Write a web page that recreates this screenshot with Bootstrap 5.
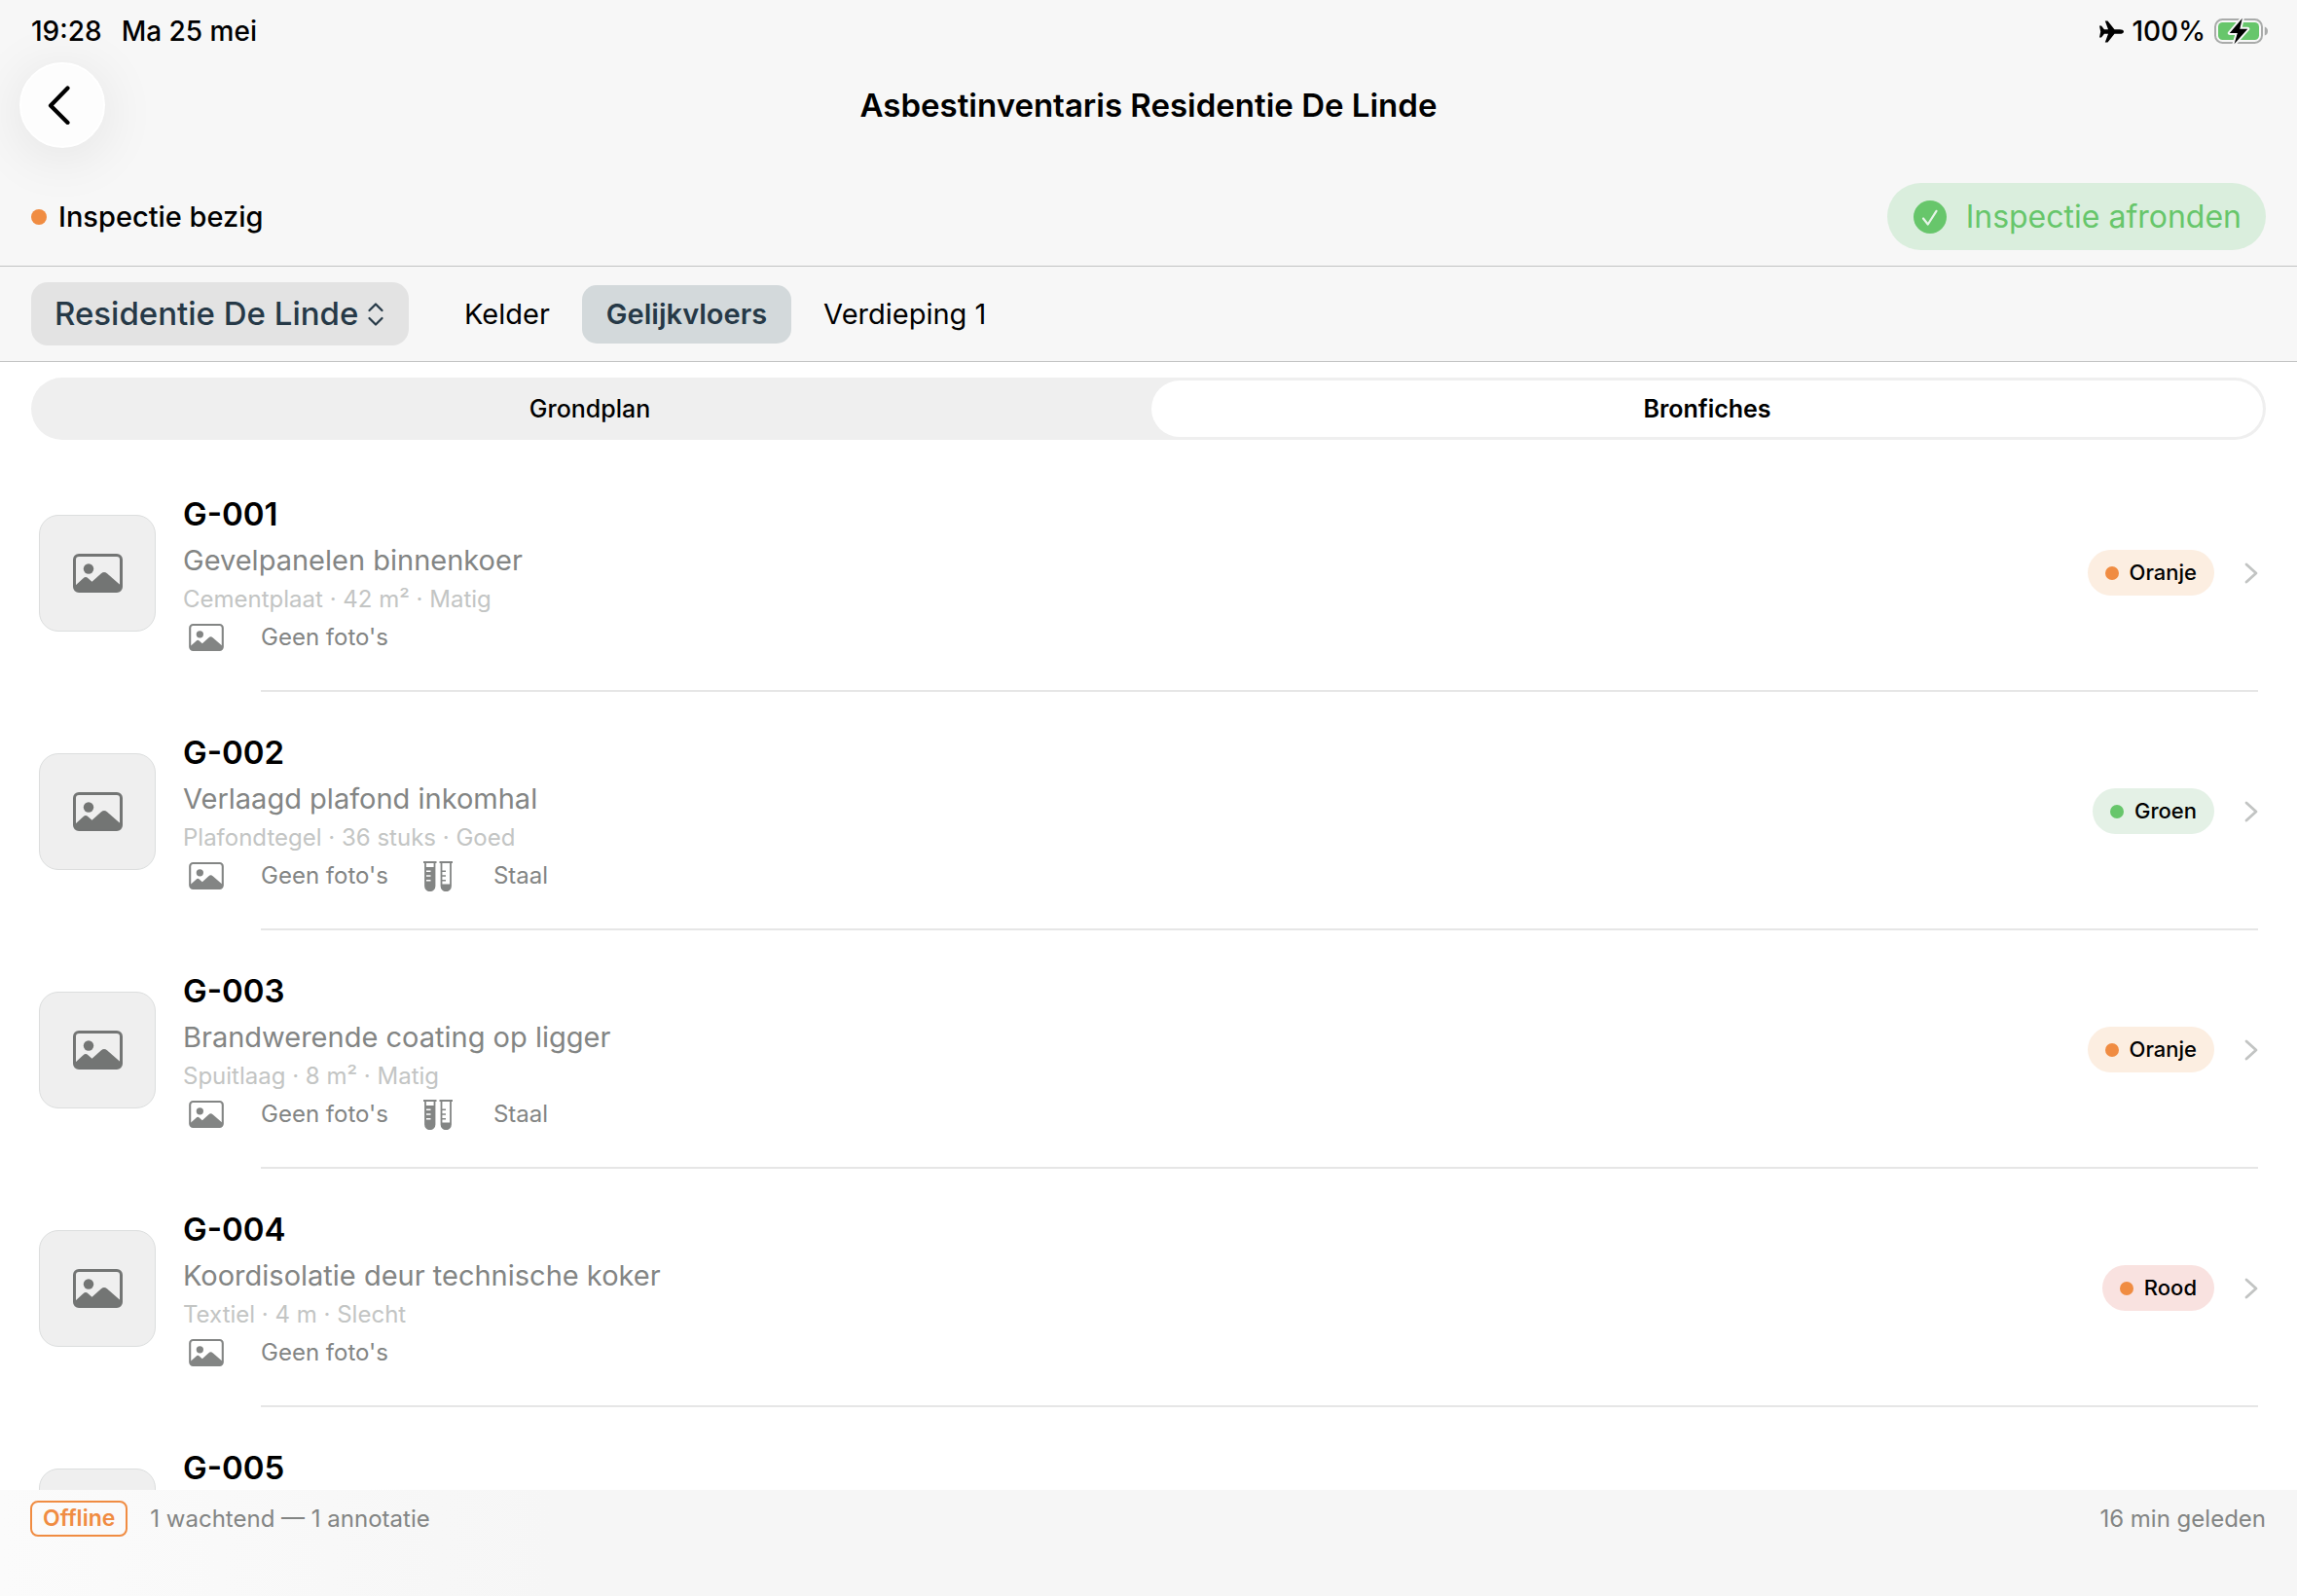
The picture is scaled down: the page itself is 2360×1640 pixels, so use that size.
<!DOCTYPE html>
<html lang="nl">
<head>
<meta charset="utf-8">
<meta name="viewport" content="width=device-width, initial-scale=1">
<title>Asbestinventaris Residentie De Linde</title>
<link href="https://cdn.jsdelivr.net/npm/bootstrap@5.3.0/dist/css/bootstrap.min.css" rel="stylesheet">
<style>
:root {
  --ink: #263947;
  --orange: #f08c42;
  --green: #67c66b;
  --grey: #838584;
  --faint: #c3c5c4;
  --bar: #f7f7f7;
  --hair: #c2c3c3;
}
body { font-family: Inter, "Liberation Sans", sans-serif; font-size: 29px; line-height: 40px; color: #000; background: #fff; }
svg { display: block; flex: none; }
.page-x { padding-left: 32px; padding-right: 32px; }
.bar { background: var(--bar); }
.hairline { border-bottom: 1px solid var(--hair); }

.status-bar { height: 64px; padding: 0 30px 0 32px; font-size: 28px; }
.clock { gap: 20px; }
.battery { margin-left: 9px; }
.title-bar { padding: 0 20px; }
.title-bar h1 { font-size: 33px; line-height: 40px; }
.back-btn { width: 88px; height: 88px; background: #fdfdfd; border: 2px solid #fff; box-shadow: 0 8px 60px rgba(0, 0, 0, .09); }
.back-btn:hover { background: #fff; }
.phase { padding-top: 36px; padding-bottom: 16px; }
.dot { width: 14px; height: 14px; border-radius: 50%; background: var(--orange); flex: none; }
.dot-lg { width: 16px; height: 16px; }
.dot-green { background: var(--green); }
.finish-btn { gap: 20px; padding: 14px 25px 14px 27px; font-size: 32px; line-height: 41px; color: var(--green); background: #daeedd; border: 0; }

.building { height: 65px; padding: 0 51px 2px 24px; font-size: 33px; color: var(--ink); background: #e3e3e3; border: 0; border-radius: 17px; appearance: none; }
.building-icon { right: 26px; top: 21px; pointer-events: none; }
.floors { gap: 8px; }
.floors .nav-link { padding: 10px 25px; color: #000; border-radius: 15px; }
.floors .nav-link.active { color: var(--ink); background: #d3d9db; }

.segments { gap: 6px; padding: 3px; border-radius: 32px; background: #efefef; }
.segments .btn { font-size: 25px; line-height: 58px; padding: 0; border: 0; border-radius: 29px; color: #000; }
.segments .btn-check:checked + .btn { background: #fff; font-weight: 600; }

.source-list { margin-top: 14px; min-height: 0; }
.source-row { padding: 2px 40px 0; color: inherit; }
.source-text { flex: 1; min-height: 241px; margin-left: 28px; padding: 36px 0 31px; }
.source-code { font-size: 33px; line-height: 48px; }
.source-name { line-height: 48px; color: var(--grey); }
.source-meta { font-size: 24px; line-height: 32px; color: var(--faint); }
.source-tags { font-size: 24px; line-height: 46px; color: var(--grey); }
.tag-icon { width: 80px; padding-left: 6px; }
.tag-icon-tube { width: 72px; padding-left: 0; margin-left: 36px; }
.thumb { width: 120px; height: 120px; border: 1px solid #dcdede; border-radius: 20px; background: #efefef; color: #737574; flex: none; }
.source-line { height: 2px; margin: 0 40px 0 268px; background: #e6e6e6; }
.risk { gap: 11px; padding: 0 18px; font-size: 22px; line-height: 47px; margin-right: 31px; }
.risk-oranje { background: #fceee1; }
.risk-groen { background: #e4f1e6; }
.risk-rood { background: #f9e2e0; }
.go { color: #c2c4c3; }

.sync-bar { min-height: 109px; padding: 11px 32px 0 31px; font-size: 24px; line-height: 37px; color: var(--grey); background: linear-gradient(90deg, #fbfbfb, #f6f6f6 24%); }
.offline { padding: 0 11px; font-size: 23px; line-height: 33px; color: var(--orange); border: 2px solid var(--orange); border-radius: 8px; margin-right: 23px; }
</style>
</head>
<body>
<svg width="0" height="0" class="position-absolute" aria-hidden="true">
  <symbol id="photo" viewBox="0 0 51 40">
    <rect x="1.5" y="1.5" width="48" height="37" rx="4.5" fill="none" stroke="currentColor" stroke-width="3"/>
    <circle cx="16" cy="15.5" r="5.2" fill="currentColor"/>
    <path d="M2 33 L10.500 25.200 Q13 23 15.500 25.200 L19.500 28.800 L29 20.300 Q32 17.800 35 20.300 L49 32.500 V35 Q49 38.500 45 38.500 H6 Q2 38.500 2 35 Z" fill="currentColor"/>
  </symbol>
  <symbol id="tubes" viewBox="0 0 30 31">
    <path d="M0 1H13.500M16.500 1H30" stroke="currentColor" stroke-width="2"/>
    <path d="M2 1V25.500A4.700 4.700 0 0 0 11.500 25.500V1M18.500 1V25.500A4.700 4.700 0 0 0 28 25.500V1" fill="none" stroke="currentColor" stroke-width="1.800"/>
    <path d="M2 6H11.500V25.500A4.700 4.700 0 0 1 2 25.500ZM18.500 23.500H28V26A4.700 4.700 0 0 1 18.500 26Z" fill="currentColor"/>
    <path d="M3 10.300H7.500M3 15H7.500M3 19.700H7.500" stroke="#fff" stroke-width="1.600"/>
    <path d="M18.500 10.300H23M18.500 15H23M18.500 19.700H23" stroke="currentColor" stroke-width="1.600"/>
  </symbol>
  <symbol id="chevron" viewBox="0 0 14 22">
    <path d="M2 2 L12 11 L2 20" fill="none" stroke="currentColor" stroke-width="2.800" stroke-linecap="round" stroke-linejoin="round"/>
  </symbol>
</svg>

<div class="d-flex flex-column vh-100 overflow-hidden">
  <header class="bar hairline">
    <div class="status-bar d-flex align-items-center justify-content-between fw-medium">
      <div class="clock d-flex"><span>19:28</span><span>Ma 25 mei</span></div>
      <div class="d-flex align-items-center">
        <svg class="me-2" width="25" height="23" viewBox="0 0 25 23" role="img" aria-label="Vliegtuigmodus"><path d="M25 11.500c0 1.500-2 2.300-4 2.300H15.500L8.500 22.500H5.800L9 13.800H5L2 17.500H0L1.200 11.500L0 5.500H2L5 9.200H9L5.800.5H8.500L15.500 9.200H21c2 0 4 .8 4 2.300z"/></svg>
        <span>100%</span>
        <svg class="battery" width="55" height="28" viewBox="0 0 55 28" role="img" aria-label="Batterij laadt op">
          <rect x="1" y="2" width="48" height="24" rx="7.500" fill="none" stroke="#a9abaa" stroke-width="2"/>
          <rect x="4" y="5" width="42" height="18" rx="4.500" fill="#67c66b"/>
          <path d="M51.800 9.500V18.500Q55 17.500 55 14T51.800 9.500Z" fill="#a9abaa"/>
          <path d="M28.800.8L15.800 16H23.800L20.500 27.200L34.300 11.700H26.300Z" fill="#000" stroke="#f7f7f7" stroke-width="4" stroke-linejoin="round" paint-order="stroke"/>
        </svg>
      </div>
    </div>
    <div class="title-bar d-flex align-items-center">
      <div class="col">
        <button type="button" class="btn back-btn rounded-circle p-0 d-flex align-items-center justify-content-center" aria-label="Terug">
          <svg width="30" height="40" viewBox="0 0 30 40"><path d="M20.500 2.500L3 20.500L20.500 38" fill="none" stroke="#000" stroke-width="4.200" stroke-linecap="round" stroke-linejoin="round"/></svg>
        </button>
      </div>
      <h1 class="fw-semibold mb-0">Asbestinventaris Residentie De Linde</h1>
      <div class="col"></div>
    </div>
    <div class="phase page-x d-flex align-items-center justify-content-between">
      <div class="d-flex align-items-center fw-medium"><span class="dot dot-lg me-2"></span><span class="ms-1">Inspectie bezig</span></div>
      <button type="button" class="btn finish-btn rounded-pill d-flex align-items-center">
        <svg width="34" height="34" viewBox="0 0 34 34"><circle cx="17" cy="17" r="17" fill="#67c66b"/><path d="M10 18.500L14.800 24.500L23.500 10.800" fill="none" stroke="#e6f4e8" stroke-width="2.200" stroke-linecap="round" stroke-linejoin="round"/></svg>
        Inspectie afronden
      </button>
    </div>
  </header>

  <div class="bar hairline page-x py-3 d-flex align-items-center">
    <div class="position-relative me-4">
      <select class="building fw-medium d-block" aria-label="Gebouw"><option>Residentie De Linde</option></select>
      <svg class="building-icon position-absolute" width="16" height="24" viewBox="0 0 16 24"><path d="M1.500 8L8 1.500L14.500 8M1.500 16L8 22.500L14.500 16" fill="none" stroke="#263947" stroke-width="2.200" stroke-linecap="round" stroke-linejoin="round"/></svg>
    </div>
    <nav class="nav floors ms-2" aria-label="Verdiepingen">
      <a class="nav-link" href="#kelder">Kelder</a>
      <a class="nav-link active fw-semibold" href="#gelijkvloers" aria-current="page">Gelijkvloers</a>
      <a class="nav-link" href="#verdieping-1">Verdieping 1</a>
    </nav>
  </div>

  <main class="d-flex flex-column flex-fill overflow-hidden">
    <div class="page-x pt-3">
      <div class="segments d-flex" role="group" aria-label="Weergave">
        <input type="radio" class="btn-check" name="view" id="view-plan">
        <label class="btn col fw-medium" for="view-plan">Grondplan</label>
        <input type="radio" class="btn-check" name="view" id="view-cards" checked>
        <label class="btn col" for="view-cards">Bronfiches</label>
      </div>
    </div>

    <ul class="source-list list-unstyled mb-0 flex-fill overflow-hidden">
      <li>
        <a class="source-row d-flex align-items-center text-decoration-none" href="#g-001">
          <span class="thumb d-flex align-items-center justify-content-center"><svg width="51" height="40"><use href="#photo"/></svg></span>
          <div class="source-text">
            <div class="source-code fw-semibold">G-001</div>
            <div class="source-name">Gevelpanelen binnenkoer</div>
            <div class="source-meta">Cementplaat · 42 m² · Matig</div>
            <div class="source-tags d-flex align-items-center"><span class="tag-icon"><svg width="36" height="28"><use href="#photo"/></svg></span>Geen foto's</div>
          </div>
          <span class="risk risk-oranje rounded-pill d-flex align-items-center fw-medium"><span class="dot"></span>Oranje</span>
          <svg class="go" width="14" height="22"><use href="#chevron"/></svg>
        </a>
        <div class="source-line"></div>
      </li>
      <li>
        <a class="source-row d-flex align-items-center text-decoration-none" href="#g-002">
          <span class="thumb d-flex align-items-center justify-content-center"><svg width="51" height="40"><use href="#photo"/></svg></span>
          <div class="source-text">
            <div class="source-code fw-semibold">G-002</div>
            <div class="source-name">Verlaagd plafond inkomhal</div>
            <div class="source-meta">Plafondtegel · 36 stuks · Goed</div>
            <div class="source-tags d-flex align-items-center"><span class="tag-icon"><svg width="36" height="28"><use href="#photo"/></svg></span>Geen foto's<span class="tag-icon tag-icon-tube"><svg width="30" height="31"><use href="#tubes"/></svg></span>Staal</div>
          </div>
          <span class="risk risk-groen rounded-pill d-flex align-items-center fw-medium"><span class="dot dot-green"></span>Groen</span>
          <svg class="go" width="14" height="22"><use href="#chevron"/></svg>
        </a>
        <div class="source-line"></div>
      </li>
      <li>
        <a class="source-row d-flex align-items-center text-decoration-none" href="#g-003">
          <span class="thumb d-flex align-items-center justify-content-center"><svg width="51" height="40"><use href="#photo"/></svg></span>
          <div class="source-text">
            <div class="source-code fw-semibold">G-003</div>
            <div class="source-name">Brandwerende coating op ligger</div>
            <div class="source-meta">Spuitlaag · 8 m² · Matig</div>
            <div class="source-tags d-flex align-items-center"><span class="tag-icon"><svg width="36" height="28"><use href="#photo"/></svg></span>Geen foto's<span class="tag-icon tag-icon-tube"><svg width="30" height="31"><use href="#tubes"/></svg></span>Staal</div>
          </div>
          <span class="risk risk-oranje rounded-pill d-flex align-items-center fw-medium"><span class="dot"></span>Oranje</span>
          <svg class="go" width="14" height="22"><use href="#chevron"/></svg>
        </a>
        <div class="source-line"></div>
      </li>
      <li>
        <a class="source-row d-flex align-items-center text-decoration-none" href="#g-004">
          <span class="thumb d-flex align-items-center justify-content-center"><svg width="51" height="40"><use href="#photo"/></svg></span>
          <div class="source-text">
            <div class="source-code fw-semibold">G-004</div>
            <div class="source-name">Koordisolatie deur technische koker</div>
            <div class="source-meta">Textiel · 4 m · Slecht</div>
            <div class="source-tags d-flex align-items-center"><span class="tag-icon"><svg width="36" height="28"><use href="#photo"/></svg></span>Geen foto's</div>
          </div>
          <span class="risk risk-rood rounded-pill d-flex align-items-center fw-medium"><span class="dot"></span>Rood</span>
          <svg class="go" width="14" height="22"><use href="#chevron"/></svg>
        </a>
        <div class="source-line"></div>
      </li>
      <li>
        <a class="source-row d-flex align-items-center text-decoration-none" href="#g-005">
          <span class="thumb"></span>
          <div class="source-text"><div class="source-code fw-semibold">G-005</div></div>
        </a>
      </li>
    </ul>
  </main>

  <footer class="sync-bar d-flex align-items-start">
    <span class="offline fw-semibold">Offline</span>
    <span>1 wachtend — 1 annotatie</span>
    <span class="ms-auto">16 min geleden</span>
  </footer>
</div>
<script src="https://cdn.jsdelivr.net/npm/bootstrap@5.3.0/dist/js/bootstrap.bundle.min.js"></script>
</body>
</html>
